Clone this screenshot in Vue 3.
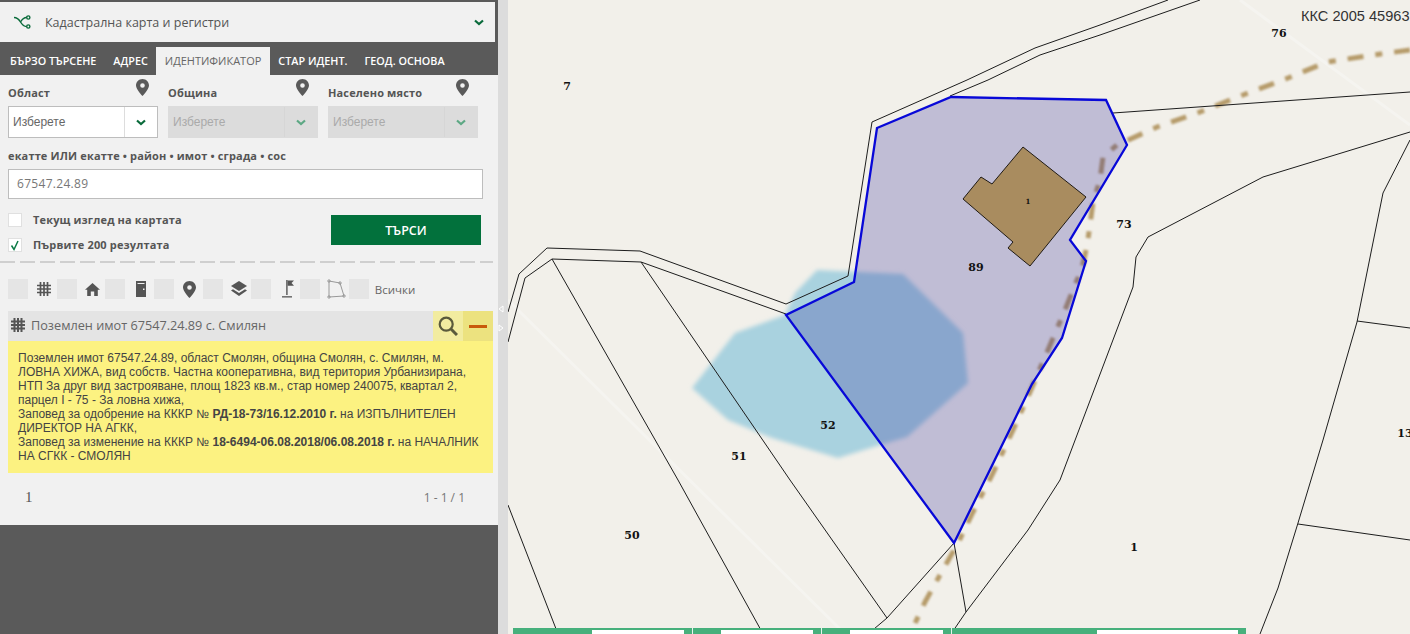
<script setup>
const tabs = [
  { label: 'БЪРЗО ТЪРСЕНЕ' },
  { label: 'АДРЕС' },
  { label: 'ИДЕНТИФИКАТОР', active: true },
  { label: 'СТАР ИДЕНТ.' },
  { label: 'ГЕОД. ОСНОВА' },
];

const locations = [
  { label: 'Област', disabled: false },
  { label: 'Община', disabled: true },
  { label: 'Населено място', disabled: true },
];

const filters = ['grid', 'home', 'door', 'pin', 'layers', 'flag', 'poly'];

// map geometry, in page coordinates (the svg viewBox starts at x=508)
const parcelLines = [
  '508,312 519,274 547,248 640,251 786,304 848,276 872,122 967,80 1035,48 1100,25 1168,0',
  '508,342 525,278 552,259 641,262 786,314',
  '950,96 988,80 1040,55 1100,35 1200,0',
  '552,259 678,480 762,632',
  '641,262 790,480 887,618 954,543 966,612 951,634',
  '887,618 868,634',
  '1113,113 1410,92',
  '966,612 1028,530 1060,480 1133,287 1136,257 1148,237 1263,177 1410,132',
  '1410,140 1383,193 1357,322 1323,440 1298,523 1278,588 1260,634',
  '1357,321 1410,328',
  '1298,524 1410,540',
  '508,505 558,634',
];

const labels = [
  { text: '7', x: 567, y: 90 },
  { text: '76', x: 1279, y: 37 },
  { text: '73', x: 1124, y: 228 },
  { text: '89', x: 976, y: 271 },
  { text: '52', x: 828, y: 429 },
  { text: '51', x: 739, y: 460 },
  { text: '50', x: 632, y: 539 },
  { text: '1', x: 1134, y: 551 },
  { text: '13', x: 1405, y: 437 },
];

const parcel = '951,97 1106,100 1127,145 1070,240 1086,261 1062,338 1032,384 954,543 786,315 854,282 877,128';
const building = '1023,147 1086,197 1030,266 1008,248 1013,242 963,199 981,177 992,184';
const lake = '817,270 903,274 963,333 968,383 907,437 880,445 838,458 772,438 728,420 692,388 735,333 785,315 795,293';
const road = '1410,50 1373,55 1327,62 1288,78 1243,95 1200,112 1157,127 1117,145 1103,157 1100,180 1093,202 1090,225 1087,246 1082,268 1073,290 1065,310 1048,350 1030,392 1013,430 993,473 973,512 958,543 940,575 925,602 910,634';

const bottomCells = [
  { width: 180, field: 92 },
  { width: 129, field: 92 },
  { width: 130, field: 93 },
  { width: 294, field: 141 },
];
</script>

<template>
  <div class="page">
    <aside class="sidebar">
      <div class="panel">
        <div class="top-strip">
          <div class="layer-select">
            <svg class="layer-icon" viewBox="0 0 18 14" width="18" height="14" fill="none" stroke="#0a6b3b" stroke-width="1.4">
              <path d="M1 2.500c4 0 5 2 6.500 4.500S11 11.500 13.500 11.500" />
              <path d="M13.500 2.500C10.500 2.500 9 4.500 7.500 7" />
              <circle cx="15.300" cy="2.500" r="1.600" />
              <circle cx="15.300" cy="11.500" r="1.600" />
            </svg>
            <span class="layer-name">Кадастрална карта и регистри</span>
            <svg class="chevron" viewBox="0 0 10 7" width="10" height="7"><path d="M1 1.500l4 3.500 4-3.500" fill="none" stroke="#0a6b3b" stroke-width="2.200" /></svg>
          </div>
          <nav class="tabs">
            <span v-for="tab in tabs" :key="tab.label" class="tab" :class="{ active: tab.active }">{{ tab.label }}</span>
          </nav>
        </div>

        <div class="locations">
          <div v-for="loc in locations" :key="loc.label" class="field">
            <div class="field-head">
              <span class="bold-label">{{ loc.label }}</span>
              <svg class="pin" viewBox="0 0 13 17" width="13" height="17"><path fill-rule="evenodd" fill="#5a5a5a" d="M6.500 0C2.900 0 0 2.900 0 6.500 0 10.500 6.500 17 6.500 17S13 10.500 13 6.500C13 2.900 10.100 0 6.500 0zm0 4.200a2.300 2.300 0 1 1 0 4.600 2.300 2.300 0 0 1 0-4.600z" /></svg>
            </div>
            <div class="select" :class="{ disabled: loc.disabled }">
              <span class="select-text">Изберете</span>
              <span class="select-btn">
                <svg viewBox="0 0 10 7" width="10" height="7"><path d="M1 1.500l4 3.500 4-3.500" fill="none" stroke="currentColor" stroke-width="2.200" /></svg>
              </span>
            </div>
          </div>
        </div>

        <div class="bold-label ident-label">екатте ИЛИ екатте • район • имот • сграда • сос</div>
        <div class="ident-input">67547.24.89</div>

        <div class="options">
          <div class="checks">
            <label class="check-row"><span class="checkbox"></span><span class="bold-label">Текущ изглед на картата</span></label>
            <label class="check-row">
              <span class="checkbox">
                <svg viewBox="0 0 14 14" width="14" height="14"><path d="M3.500 7.500l2.500 4L10 3" fill="none" stroke="#0a7a45" stroke-width="1.500" /></svg>
              </span>
              <span class="bold-label">Първите 200 резултата</span>
            </label>
          </div>
          <button class="search-btn" type="button">ТЪРСИ</button>
        </div>

        <div class="dashed"></div>

        <div class="filters">
          <div v-for="name in filters" :key="name" class="filter">
            <span class="filter-box"></span>
            <span class="filter-icon">
              <svg v-if="name === 'grid'" viewBox="0 0 14 14" width="14" height="14" fill="none" stroke="#555" stroke-width="1.700"><path d="M3.500 0v14M7 0v14M10.500 0v14M0 3.500h14M0 7h14M0 10.500h14" /></svg>
              <svg v-else-if="name === 'home'" viewBox="0 0 15 13" width="15" height="13" fill="#555"><path d="M7.500 0L0 6.800h2.200V13h3.600V8.500h3.400V13h3.600V6.800H15z" /></svg>
              <svg v-else-if="name === 'door'" viewBox="0 0 10 16" width="10" height="16"><path fill="#555" d="M0 0h10v16H0z" /><path fill="#f1f1f1" d="M1.500 2h7v1h-7zM7 7.500h1.500v1.500H7z" /></svg>
              <svg v-else-if="name === 'pin'" viewBox="0 0 13 17" width="13" height="17"><path fill-rule="evenodd" fill="#555" d="M6.500 0C2.900 0 0 2.900 0 6.500 0 10.500 6.500 17 6.500 17S13 10.500 13 6.500C13 2.900 10.100 0 6.500 0zm0 4.200a2.300 2.300 0 1 1 0 4.600 2.300 2.300 0 0 1 0-4.600z" /></svg>
              <svg v-else-if="name === 'layers'" viewBox="0 0 16 16" width="16" height="16" fill="#555"><path d="M8 0l8 5-8 5-8-5z" /><path d="M2 8.200l6 3.800 6-3.800 2 1.300-8 5.500-8-5.500z" /></svg>
              <svg v-else-if="name === 'flag'" viewBox="0 0 13 18" width="13" height="18" fill="#555"><path d="M5.200 0h1.400v15H5.200z" /><path d="M6.600 .5H13L10.500 3 13 5.800H6.600z" /><path d="M1 16.200h10V17.500H1z" /></svg>
              <svg v-else viewBox="0 0 20 20" width="20" height="20" fill="none" stroke="#999" stroke-width="1"><path d="M3 2l11 2 4 13-15 1z" /><circle cx="3" cy="2" r="1.200" /><circle cx="14" cy="4" r="1.200" /><circle cx="18" cy="17" r="1.200" /><circle cx="3" cy="18" r="1.200" /></svg>
            </span>
          </div>
          <span class="filter-box"></span>
          <span class="all-label">Всички</span>
        </div>

        <div class="result-head">
          <div class="result-title">
            <svg viewBox="0 0 14 14" width="14" height="14" fill="none" stroke="#555" stroke-width="2"><path d="M3.500 0v14M7 0v14M10.500 0v14M0 3.500h14M0 7h14M0 10.500h14" /></svg>
            <span>Поземлен имот 67547.24.89 с. Смилян</span>
          </div>
          <button class="result-btn zoom-btn" type="button">
            <svg viewBox="0 0 20 20" width="20" height="20" fill="none" stroke="#5a5a3c"><circle cx="8.200" cy="8.200" r="6.500" stroke-width="2.200" /><path d="M13 13l6 6" stroke-width="3" /></svg>
          </button>
          <button class="result-btn minus-btn" type="button"><span class="minus"></span></button>
        </div>
        <div class="result-body">
          Поземлен имот 67547.24.89, област Смолян, община Смолян, с. Смилян, м. ЛОВНА ХИЖА, вид собств. Частна кооперативна, вид територия Урбанизирана, НТП За друг вид застрояване, площ 1823 кв.м., стар номер 240075, квартал 2, парцел I - 75 - За ловна хижа,<br />
          Заповед за одобрение на КККР № <b>РД-18-73/16.12.2010 г.</b> на ИЗПЪЛНИТЕЛЕН ДИРЕКТОР НА АГКК,<br />
          Заповед за изменение на КККР № <b>18-6494-06.08.2018/06.08.2018 г.</b> на НАЧАЛНИК НА СГКК - СМОЛЯН
        </div>

        <div class="pagination">
          <span class="page-num">1</span>
          <span class="page-count">1 - 1 / 1</span>
        </div>
      </div>
    </aside>

    <div class="splitter">
      <svg viewBox="0 0 6 8" width="6" height="8"><path d="M5 1v6L1 4z" fill="none" stroke="#fff" /></svg>
      <svg viewBox="0 0 6 8" width="6" height="8"><path d="M1 1v6l4-3z" fill="none" stroke="#fff" /></svg>
    </div>

    <main class="map">
      <svg class="map-svg" viewBox="508 0 902 634" width="902" height="634">
        <defs>
          <filter id="soft" x="-10%" y="-10%" width="120%" height="120%"><feGaussianBlur stdDeviation="2" /></filter>
          <filter id="soft-road" x="-5%" y="-5%" width="110%" height="110%"><feGaussianBlur stdDeviation="1.200" /></filter>
        </defs>
        <path d="M508 300L845 634M1240 0L1410 125" stroke="#f5f4f0" stroke-width="3" fill="none" />
        <polyline :points="road" fill="none" stroke="#ac8d55" stroke-width="5" stroke-dasharray="16 12 7 12" filter="url(#soft-road)" opacity="0.85" />
        <polygon :points="lake" fill="#a9d2df" filter="url(#soft)" />
        <polyline v-for="(line, i) in parcelLines" :key="i" :points="line" fill="none" stroke="#1d1d1d" stroke-width="1" />
        <polygon :points="parcel" fill="rgba(42,36,150,0.25)" />
        <polygon :points="building" fill="#a98c5f" stroke="#1f1a14" stroke-width="1" />
        <polygon :points="parcel" fill="none" stroke="#0808d8" stroke-width="2.300" />
        <text v-for="l in labels" :key="l.text + l.x" class="map-label" :x="l.x" :y="l.y" text-anchor="middle">{{ l.text }}</text>
        <text class="map-label small" x="1028" y="204" text-anchor="middle">1</text>
      </svg>

      <div class="coord-system">ККС 2005 45963</div>

      <div class="bottom-bar">
        <div v-for="(cell, i) in bottomCells" :key="i" class="bottom-cell" :style="{ width: cell.width + 'px' }">
          <span class="bottom-field" :style="{ width: cell.field + 'px' }"></span>
        </div>
      </div>
    </main>
  </div>
</template>

<style scoped>
.page {
  display: flex;
  width: 1410px;
  height: 634px;
  overflow: hidden;
  background: #5a5a5a;
  font-family: "Open Sans", "Noto Sans", sans-serif;
}
.sidebar {
  width: 498px;
  flex: none;
  background: #5a5a5a;
}
.panel {
  height: 525px;
  background: #f1f1f1;
  overflow: hidden;
}
.top-strip {
  background: #5a5a5a;
  padding-top: 2px;
}
.layer-select {
  display: flex;
  align-items: center;
  width: 495px;
  height: 40px;
  padding: 0 11px 0 13px;
  box-sizing: border-box;
  background: #f1f1f1;
}
.layer-name {
  margin-left: 14px;
  font-size: 12.500px;
  color: #555;
  flex: 1;
}
.tabs {
  display: flex;
  align-items: flex-end;
  height: 33px;
  padding-left: 1.500px;
}
.tab {
  padding: 0 8.500px;
  height: 28px;
  line-height: 28px;
  font-size: 10.800px;
  font-weight: 600;
  color: #fff;
  white-space: nowrap;
}
.tab.active {
  background: #f1f1f1;
  color: #666;
  font-weight: 400;
  font-size: 11px;
}
.locations {
  display: flex;
  gap: 10px;
  padding-left: 8px;
}
.field {
  width: 150px;
}
.field-head {
  display: flex;
  justify-content: space-between;
  height: 31px;
  padding: 10px 9px 0 0;
  box-sizing: border-box;
}
.pin {
  margin-top: -6px;
}
.bold-label {
  font-size: 11px;
  line-height: 16px;
  font-weight: 700;
  color: #555;
  letter-spacing: 0.15px;
}
.select {
  display: flex;
  height: 32px;
  border: 1px solid #bdbdbd;
  box-sizing: border-box;
  background: #fff;
  font-family: "Liberation Sans", Arial, sans-serif;
  font-size: 12px;
  color: #666;
}
.select-text {
  flex: 1;
  padding-left: 4px;
  line-height: 30px;
}
.select-btn {
  display: flex;
  align-items: center;
  justify-content: center;
  width: 32px;
  border-left: 1px solid #ddd;
  color: #0a6b3b;
}
.select.disabled {
  border-color: #dcdcdc;
  background: #dcdcdc;
  color: #aaa;
}
.select.disabled .select-btn {
  border-left-color: #d6d6d6;
  color: #5da884;
}
.ident-label {
  margin: 10px 0 5px 8px;
}
.ident-input {
  width: 475px;
  height: 30px;
  margin-left: 8px;
  padding-left: 8px;
  border: 1px solid #bdbdbd;
  box-sizing: border-box;
  background: #fff;
  font-size: 12px;
  line-height: 28px;
  letter-spacing: 0.3px;
  color: #777;
}
.options {
  display: flex;
  justify-content: space-between;
  padding: 14px 17px 0 8px;
}
.checks {
  display: flex;
  flex-direction: column;
  gap: 11px;
}
.check-row {
  display: flex;
  align-items: center;
  gap: 11px;
  height: 14px;
}
.checkbox {
  display: block;
  width: 14px;
  height: 14px;
  background: #fff;
  border: 1px solid #e0e0e0;
  box-sizing: border-box;
}
.checkbox svg {
  display: block;
  margin: -1px;
}
.search-btn {
  width: 150px;
  height: 30px;
  margin-top: 2px;
  border: none;
  background: #02713c;
  color: #fff;
  font-family: inherit;
  font-size: 12.500px;
  font-weight: 600;
}
.dashed {
  width: 493px;
  height: 2px;
  margin-top: 9px;
  background: repeating-linear-gradient(90deg, #cfcfcf 0 15px, transparent 15px 20px);
}
.filters {
  display: flex;
  align-items: center;
  height: 20px;
  margin: 16px 0 12px 8px;
}
.filter {
  display: flex;
  align-items: center;
  width: 48.700px;
}
.filter-box {
  display: block;
  flex: none;
  width: 20px;
  height: 20px;
  background: #e5e5e5;
}
.filter-icon {
  display: flex;
  flex: 1;
  justify-content: center;
  align-items: center;
  padding-left: 3px;
}
.all-label {
  margin-left: 6px;
  font-size: 11.500px;
  color: #666;
}
.result-head {
  display: flex;
  height: 30px;
  margin: 0 5px 0 8px;
}
.result-title {
  display: flex;
  align-items: center;
  flex: 1;
  gap: 6px;
  padding: 0 0 2px 3px;
  background: #e4e4e4;
  font-size: 12.700px;
  color: #666;
}
.result-btn {
  display: flex;
  align-items: center;
  justify-content: center;
  width: 30px;
  padding: 0;
  border: none;
}
.zoom-btn {
  background: #f2eca0;
}
.minus-btn {
  background: #ece27f;
}
.minus {
  display: block;
  width: 18px;
  height: 3px;
  background: #c8590b;
}
.result-body {
  margin: 0 5px 0 8px;
  padding: 10px 10px;
  background: #fcf281;
  font-family: "Liberation Sans", Arial, sans-serif;
  font-size: 12px;
  line-height: 14px;
  color: #444;
}
.pagination {
  display: flex;
  justify-content: space-between;
  align-items: center;
  height: 48px;
  padding: 0 33px 0 25px;
}
.page-num {
  font-family: "Liberation Serif", serif;
  font-size: 15px;
  color: #555;
}
.page-count {
  font-size: 12px;
  color: #777;
}
.splitter {
  display: flex;
  flex-direction: column;
  align-items: flex-start;
  justify-content: center;
  gap: 11px;
  width: 10px;
  padding: 3px 0 0 0;
  box-sizing: border-box;
  flex: none;
  background: #dcdcdc;
}
.map {
  position: relative;
  flex: 1;
  overflow: hidden;
  background: #f2f0ea;
}
.map-svg {
  display: block;
}
.map-label {
  font-family: "DejaVu Serif", serif;
  font-size: 11px;
  font-weight: 700;
  fill: #111;
}
.map-label.small {
  font-size: 7px;
}
.coord-system {
  position: absolute;
  top: 8px;
  left: 793px;
  font-family: "Liberation Sans", Arial, sans-serif;
  font-size: 14.600px;
  color: #333;
  white-space: nowrap;
}
.bottom-bar {
  position: absolute;
  left: 5px;
  bottom: 0;
  display: flex;
  height: 6px;
  background: #47b07c;
}
.bottom-cell {
  display: flex;
  justify-content: flex-end;
  padding: 2px 8px 0 0;
  box-sizing: border-box;
  border-right: 1px solid #e8f4ee;
}
.bottom-cell:last-child {
  border-right: none;
}
.bottom-field {
  display: block;
  background: #fff;
}
</style>

<style>
html, body {
  margin: 0;
  overflow: hidden;
}
</style>
